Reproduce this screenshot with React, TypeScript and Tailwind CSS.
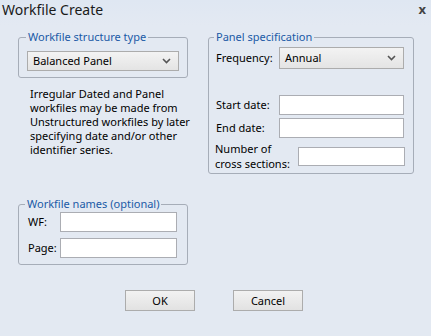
import React from "react";

const font = { fontFamily: '"Noto Sans", "Open Sans", sans-serif' };

function Chevron() {
  return (
    <svg width="9" height="6" viewBox="0 0 9 6" className="block">
      <path d="M1 1 L4.5 4.5 L8 1" fill="none" stroke="#555" strokeWidth="1.6" />
    </svg>
  );
}

function Select({ value, className }: { value: string; className: string }) {
  return (
    <div
      className={
        "flex items-center justify-between border border-[#acacac] bg-gradient-to-b from-[#f3f3f3] to-[#e4e4e4] pl-[5px] pr-[7px] text-[11px] text-black " +
        className
      }
    >
      <span>{value}</span>
      <Chevron />
    </div>
  );
}

function Input({ className }: { className: string }) {
  return <div className={"border border-[#abadb3] bg-white " + className} />;
}

export default function App() {
  return (
    <div
      style={font}
      className="relative h-[336px] w-[431px] overflow-hidden bg-[#e3e9f2] text-[11px] leading-[14px] text-black"
    >
      <div className="flex h-[25px] items-start justify-between bg-gradient-to-b from-[#dfe7f2] to-[#e3e9f2] pl-[2px] pr-[5px]">
        <span className="mt-[0px] text-[14px] leading-[20px] text-[#1a1a1a]">Workfile Create</span>
        <span className="mt-[1px] text-[13px] font-bold leading-[16px] text-[#444]">x</span>
      </div>

      <div className="flex pl-[18px]">
        {/* left column */}
        <div className="flex w-[170px] flex-col">
          <fieldset className="mt-[5px] h-[48px] rounded-[3px] border border-[#a6adb8] px-[8px]">
            <legend className="-ml-[1px] px-[2px] text-[11px] leading-[14px] text-[#1a5aa6]">
              Workfile structure type
            </legend>
            <Select value="Balanced Panel" className="mt-[7px] h-[20px] w-[152px]" />
          </fieldset>

          <p className="ml-[12px] mt-[9px] w-[162px] text-[11px] leading-[14px]">
            Irregular Dated and Panel workfiles may be made from Unstructured workfiles by later
            specifying date and/or other identifier series.
          </p>

          <fieldset className="mt-[40px] h-[68px] rounded-[3px] border border-[#a6adb8] pl-[9px] pr-[10px]">
            <legend className="-ml-[3px] px-[2px] text-[11px] leading-[14px] text-[#1a5aa6]">
              Workfile names (optional)
            </legend>
            <div className="mt-[1px] flex items-center justify-between">
              <span>WF:</span>
              <Input className="h-[20px] w-[117px]" />
            </div>
            <div className="mt-[6px] flex items-center justify-between">
              <span>Page:</span>
              <Input className="h-[20px] w-[117px]" />
            </div>
          </fieldset>
        </div>

        {/* right column */}
        <div className="ml-[20px] w-[206px]">
          <fieldset className="mt-[5px] h-[144px] rounded-[3px] border border-[#a6adb8] pl-[7px] pr-[9px]">
            <legend className="-ml-[2px] px-[2px] text-[11px] leading-[14px] text-[#1a5aa6]">
              Panel specification
            </legend>
            <div className="mt-[3px] flex items-center justify-between">
              <span>Frequency:</span>
              <Select value="Annual" className="h-[22px] w-[125px]" />
            </div>
            <div className="mt-[26px] flex items-center justify-between">
              <span>Start date:</span>
              <Input className="h-[20px] w-[125px]" />
            </div>
            <div className="mt-[3px] flex items-center justify-between">
              <span>End date:</span>
              <Input className="h-[20px] w-[125px]" />
            </div>
            <div className="mt-[3px] flex items-center justify-between">
              <span className="-ml-[1px] leading-[15px]">
                Number of
                <br />
                cross sections:
              </span>
              <Input className="-mr-[1px] h-[19px] w-[107px]" />
            </div>
          </fieldset>
        </div>
      </div>

      <div className="mt-[25px] flex pl-[125px]">
        <button className="h-[21px] w-[70px] border border-[#acacac] bg-gradient-to-b from-[#f2f2f2] to-[#e2e2e2] text-[11px]">
          OK
        </button>
        <button className="ml-[38px] h-[21px] w-[70px] border border-[#acacac] bg-gradient-to-b from-[#f2f2f2] to-[#e2e2e2] text-[11px]">
          Cancel
        </button>
      </div>
    </div>
  );
}
